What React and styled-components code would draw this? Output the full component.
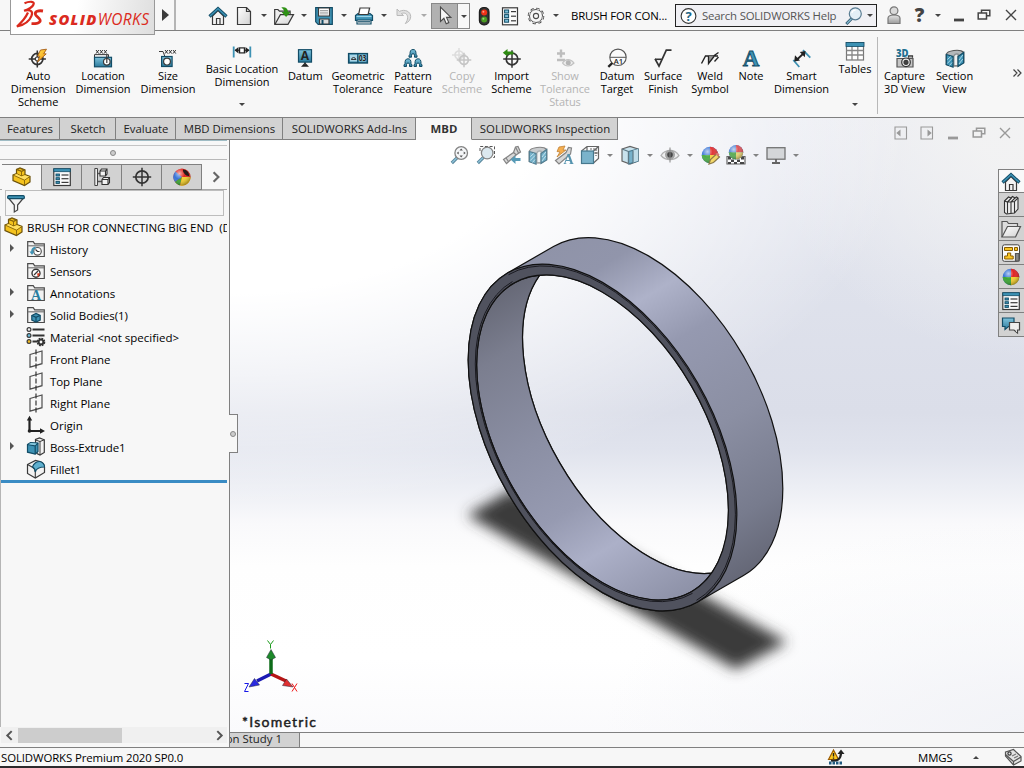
import React from 'react';
import styled, { createGlobalStyle, css } from 'styled-components';

const Global = createGlobalStyle`
  * { box-sizing: border-box; }
  body { margin: 0; background: #f7f7f7; overflow: hidden; }
  svg { display: block; flex: none; overflow: visible; }
`;

const ui = '"Open Sans", "Noto Sans", sans-serif';
const line = '#808080';
const ink = '#3a3a3a';
const blue = '#3d92b4';
const navy = '#124c66';

/* ---------- icons ---------- */

const Svg = ({ w = 20, h = 20, children, box }) => (
  <svg width={w} height={h} viewBox={box || `0 0 ${w} ${h}`} fill="none" stroke={ink} strokeWidth="1.2">{children}</svg>
);

const DefsSvg = styled.svg`position: absolute;`;
const Defs = () => (
  <DefsSvg width="0" height="0">
    <defs>
      <linearGradient id="gBlue" x1="0" y1="0" x2="0" y2="1"><stop offset="0" stopColor="#7fc3dc" /><stop offset="1" stopColor="#2b7b9d" /></linearGradient>
      <linearGradient id="gPaper" x1="0" y1="0" x2="1" y2="1"><stop offset="0" stopColor="#fff" /><stop offset="1" stopColor="#d2d2d2" /></linearGradient>
      <linearGradient id="gBolt" x1="0" y1="0" x2="1" y2="1"><stop offset="0" stopColor="#ffe14a" /><stop offset="1" stopColor="#f09416" /></linearGradient>
      <linearGradient id="gGray" x1="0" y1="0" x2="0" y2="1"><stop offset="0" stopColor="#e4e4e4" /><stop offset="1" stopColor="#9c9c9c" /></linearGradient>
      <radialGradient id="gShine" cx="0.35" cy="0.3" r="0.7"><stop offset="0" stopColor="#fff" stopOpacity="0.65" /><stop offset="0.45" stopColor="#fff" stopOpacity="0" /><stop offset="1" stopColor="#000" stopOpacity="0.3" /></radialGradient>
    </defs>
  </DefsSvg>
);

const Home = () => (
  <Svg>
    <path d="M4.5 10v8.5h11V10L10 4.6z" fill="#f4f4f4" />
    <path d="M8.5 18.5v-6h3.5v6" />
    <path d="M1.5 10.5 10 2.6l8.500 7.900" stroke={navy} strokeWidth="3.2" />
    <path d="M2 10.100 10 2.700l8 7.400" stroke={blue} strokeWidth="1.400" />
  </Svg>
);
const Doc = () => <Svg><path d="M3.5 1.5h9l4 4v13h-13z" fill="url(#gPaper)" /><path d="M12.5 1.5v4h4" /></Svg>;
const OpenDoc = () => (
  <Svg w={22}>
    <path d="M1.7 18.3V3.5h3.2l1.6 1.7h10.6v3.4" fill="#eee" />
    <path d="M2 18.3 7.4 8.6h13.1L15 18.3z" fill="url(#gPaper)" />
    <path d="M8.3 1.500c4.400-.8 6.500 1.200 6.800 4.600h2.400l-4.400 5-4.500-5h2.600c-.2-2-1-3.200-2.900-4.600z" fill="#2f9216" stroke="none" />
  </Svg>
);
const Save = () => (
  <Svg>
    <path d="M1.7 1.7h16.6v16.6H4.2l-2.5-2.5z" fill={blue} stroke={navy} />
    <path d="M4.5 2h11v8h-11z" fill="#fff" stroke={ink} />
    <path d="M6 4.5h8M6 6.2h8M6 7.9h8" stroke="#999" strokeWidth="0.9" />
    <path d="M5.5 13h9.5v5H5.5z" fill="#ddd" /><path d="M7.5 14h2v4h-2z" fill={navy} stroke="none" />
  </Svg>
);
const Print = () => (
  <Svg>
    <path d="M1.5 9.5 4 7.5h12l2.5 2v5h-17z" fill={blue} stroke={navy} />
    <path d="M6 2h9.6l-1.5 6.5H4.6z" fill="#fff" />
    <path d="M2.5 10.5h15" stroke="#9bd4e8" /><path d="M3 14h14v4H3z" fill="#eee" stroke={navy} /><path d="M4 15.8h12" stroke={navy} />
  </Svg>
);
const Undo = () => <Svg><path d="M3 3v6.5h6.5L7.4 7.6c3.300-1.500 6.200.2 6.200 4 0 2-.7 3.800-2.300 6 3.500-1.600 5.400-3.900 5.400-7 0-5-5.800-7.900-11.300-5.200z" fill="#e0e0e0" stroke="#b9b9b9" strokeWidth="1" /></Svg>;
const Cursor = () => <Svg><path d="M5.5 1v14.5l3.400-3.2 2.300 5.400 2.600-1.100-2.300-5.200h4.400z" fill="#f7f7f7" stroke="#4a4a4a" strokeWidth="1.1" /></Svg>;
const Traffic = () => (
  <Svg><rect x="5.4" y="1.5" width="9.6" height="17.4" rx="4.4" fill="#333" stroke="#1d1d1d" /><circle cx="10.2" cy="6.6" r="3" fill="#f03016" stroke="none" /><circle cx="10.2" cy="13.6" r="3" fill="#4a9b22" stroke="none" /><circle cx="9.4" cy="5.8" r="1" fill="#ff9b85" stroke="none" /><circle cx="9.4" cy="12.8" r="1" fill="#9bd67f" stroke="none" /></Svg>
);
const ListIcon = () => (
  <Svg>
    <rect x="2.5" y="1.8" width="15" height="17" fill="#fafafa" />
    {[4, 8.6, 13.2].map((y) => <g key={y}><rect x="4.6" y={y} width="4" height="3" fill="#7cc0da" stroke={navy} strokeWidth="1" /><path d={`M11 ${y + 1.6}h5`} /></g>)}
  </Svg>
);
const Gear = () => (
  <Svg>
    <circle cx="10" cy="10" r="7.3" stroke="#4c4c4c" strokeWidth="2" strokeDasharray="3.3 2.43" />
    <circle cx="10" cy="10" r="6.5" fill="#f7f7f7" stroke="#4c4c4c" strokeWidth="1" />
    <circle cx="10" cy="10" r="7" stroke="#f7f7f7" strokeWidth="1" strokeDasharray="2.2 3.3" strokeDashoffset="-.5" />
    <circle cx="10" cy="10" r="2.6" stroke="#4c4c4c" strokeWidth="1.1" />
  </Svg>
);
const HelpCircle = () => <Svg><circle cx="9.5" cy="10" r="7.4" fill="#fff" stroke="#333" strokeWidth="1.1" /><text x="9.5" y="14.7" fontSize="13" fontWeight="700" fontFamily={ui} textAnchor="middle" fill="#1e6686" stroke="none">?</text></Svg>;
const SearchGlass = () => (
  <Svg><path d="M2.3 18 8 12.2" stroke="#31566d" strokeWidth="3" /><path d="M2.8 17.5 8 12.2" stroke="#83b9d0" strokeWidth="1.3" /><circle cx="11.3" cy="7.8" r="6" fill="#e3eff6" stroke="#587b91" /><path d="M7.8 7a4 4 0 0 1 4-3" stroke="#fff" /></Svg>
);
const Person = () => <Svg><path d="M4 18.500v-5.300c0-2.100 2-3.200 6-3.200s6 1.100 6 3.200v5.300z" fill="url(#gGray)" stroke="#777" /><circle cx="10" cy="5.8" r="3.9" fill="#dadada" stroke="#777" /></Svg>;

const Crosshair = ({ c = '#333', children, x = 10, y = 11, r = 5.8 }) => (
  <><circle cx={x} cy={y} r={r} stroke={c} strokeWidth="1.7" /><path d={`M${x - r - 3} ${y}h${2 * r + 6}M${x} ${y - r - 3}v${2 * r + 6}`} stroke={c} strokeWidth="1.5" />{children}</>
);
const AutoDim = () => <Svg><Crosshair x={9.3} y={11} r={5.6}><circle cx="9.3" cy="11" r="2" fill="#f7f7f7" /><path d="m12.500 2 6-.8-2.800 4.500 2.500.2-8.700 8 2.300-5.600-2.200-.3z" fill="url(#gBolt)" stroke="#a75e15" strokeWidth="0.9" /></Crosshair></Svg>;
const Xxx = ({ x }) => <path d={[0, 4, 8].map((d) => `M${x + d} 2l2.8 3.6m0-3.6l-2.8 3.6`).join('')} stroke="#333" strokeWidth="1" />;
const LocDim = () => <Svg><Xxx x={3} /><path d="M1.5 9V6.6h14V13" strokeWidth="1" /><rect x="1.5" y="9.3" width="17" height="9.5" fill="url(#gBlue)" stroke={navy} /><circle cx="13.8" cy="13.8" r="3.3" fill="#fff" /><path d="M13.8 7v8" /></Svg>;
const SizeDim = () => <Svg><Xxx x={7} /><path d="M1 3.5h4l3 8" strokeWidth="1" /><rect x="3.6" y="8.5" width="10.5" height="10" fill="url(#gBlue)" stroke={navy} /><circle cx="9" cy="13.6" r="3.4" fill="#fff" /></Svg>;
const BasicDim = () => <Svg h={19} box="0 -2.5 20 19"><path d="M1.700 2v11M18.300 2v11" stroke={blue} strokeWidth="1.8" /><path d="M3 5.8h14" strokeWidth="1.3" /><path d="m2.500 5.800 4-3.300v6.600zM17.500 5.800l-4-3.300v6.600z" fill="#222" stroke="none" /><rect x="7.6" y="3.4" width="4.8" height="5" fill="#fff" stroke="#222" strokeWidth="1.2" /></Svg>;
const Datum = () => <Svg><path d="M6 18.8 10 14.5l4 4.3z" fill="#222" stroke="none" /><path d="M10 13v4" strokeWidth="1.5" /><rect x="3.5" y="1.7" width="13" height="12.4" fill="url(#gBlue)" stroke={navy} /><text x="10" y="12.2" textAnchor="middle" fontFamily={ui} fontWeight="700" fontSize="12" fill="#222" stroke="none">A</text></Svg>;
const GeoTol = () => <Svg><rect x=".6" y="5.6" width="18.8" height="9.4" fill="url(#gBlue)" stroke={navy} strokeWidth="1.4" /><rect x="2" y="7" width="7" height="6.5" fill="#aad5e6" stroke="none" /><rect x="10.600" y="7" width="7.600" height="6.500" fill="#9ccde0" stroke="none" /><path d="M9.8 6v9" stroke={navy} /><path d="M3.2 11.500h5M3.600 11.500a2 2 0 0 1 4 0" strokeWidth="1" /><text x="10.7" y="13.2" fontFamily={ui} fontWeight="700" fontSize="8" textLength="7.6" lengthAdjust="spacingAndGlyphs" fill="#222" stroke="none">03</text></Svg>;
const Bell = ({ x, y }) => <path d={`M${x} ${y + 8}v-1.500l1-1.500c0-3 .5-4.700 3-4.700s3 1.700 3 4.700l1 1.500v1.500h-2.500v-2a1.500 1.500 0 0 0-3 0v2z`} fill="url(#gBlue)" stroke={navy} strokeWidth="1" />;
const PatternF = () => <Svg><Bell x={6} y={1.2} /><Bell x={1} y={10.5} /><Bell x={11} y={10.5} /></Svg>;
const CopyS = () => <Svg><g opacity="0.75"><Crosshair c="#d5d5d5" x={7} y={7} r={4} /><Crosshair c="#b5b5b5" x={12} y={12} r={4.3} /></g></Svg>;
const ImportS = () => <Svg><Crosshair x={10} y={11} r={5.8} /><path d="M.8 4.8 5.5 1v2.400h5.800v3H5.500v2z" fill="#2d8a11" stroke="none" /></Svg>;
const ShowTol = () => <Svg><path d="M6 1.500v8M2 5.500h8M2 12h8" stroke="#bdbdbd" strokeWidth="2.400" /><path d="M7.500 15c3-4.500 8-4.500 11.500 0-3.500 4-8.500 4-11.500 0z" fill="#eee" stroke="#c2c2c2" /><circle cx="13.300" cy="14.700" r="2.500" fill="#b5b5b5" stroke="none" /></Svg>;
const DatumT = () => <Svg><circle cx="11" cy="9.300" r="8.200" fill="#fafafa" stroke="#555" strokeWidth="1.100" /><path d="M3 9.300h16" stroke="#555" strokeWidth="1" /><text x="11.300" y="15.800" textAnchor="middle" fontFamily={ui} fontWeight="600" fontSize="7.500" fill="#222" stroke="none">A1</text><path d="M1.300 18.800 5.300 15" stroke="#222" strokeWidth="2.400" /></Svg>;
const Surface = () => <Svg><path d="m2 10.800 4 7.200L13.300 2.200h5.200" stroke="#333" strokeWidth="1.700" /><path d="M2 11.300h6.800" stroke="#333" strokeWidth="1.600" /></Svg>;
const Weld = () => <Svg><path d="M1.500 15.500 5.500 8h12.500M13.500 8l5-3.500" stroke="#222" strokeWidth="1.400" /><path d="M8.500 8v7.500l5.500-7" fill="#999" stroke="#222" strokeWidth="1.300" /><path d="M14.500 13.500 18.500 9" stroke="#222" strokeWidth="1.300" /></Svg>;
const Note = () => <Svg><text x="10" y="18" textAnchor="middle" fontFamily='"Liberation Serif", serif' fontWeight="700" fontSize="23" fill={blue} stroke={navy} strokeWidth="0.900">A</text></Svg>;
const SmartD = () => <Svg><path d="m1.300 12 6 7M11 2.200l7.300 7.500" stroke={blue} strokeWidth="1.800" /><path d="m4.500 12 7.500-7" stroke="#222" strokeWidth="1.800" /><path d="m2.200 13.500.8-6.300 5 5.200zM13.500 3l-.700 6.200-5-5.100z" fill="#222" stroke="none" /></Svg>;
const Tables = () => <Svg h={19}><rect x="1.500" y=".7" width="17" height="17.300" fill="#fff" stroke="#777" /><path d="M1.500 8.500h17M1.500 13h17M7 4v14M12.800 4v14" stroke="#888" strokeWidth="1.300" /><rect x="1" y=".5" width="18" height="4" fill={blue} stroke={navy} strokeWidth=".8" /></Svg>;
const Capture = () => <Svg><path d="M2 10.500h16v8.500H2z" fill="#c5c5c5" stroke="#555" /><path d="M13.500 9.800V7.800h4v2" fill="#aaa" /><circle cx="11" cy="14.300" r="4.300" fill="#eee" stroke="#333" /><circle cx="11" cy="14.300" r="2" fill="#444" /><text x="1" y="9" fontFamily={ui} fontWeight="800" fontSize="10.500" textLength="12.500" lengthAdjust="spacingAndGlyphs" fill="#217092" stroke="none">3D</text></Svg>;
const Section = ({ f }) => (
  <Svg><g opacity={f ? 0.8 : 1}>
    <path d="M1.300 6.500C2 2.500 15 .500 18.700 4.500v10l-5.200 3.500-6 0-6.200-1.500z" fill="#b4b8bb" stroke="#555" />
    <path d="M8 8.500C9 5 12.500 4.500 14.500 6.500L13.500 8v9.500H8z" fill="#8b9093" stroke="none" />
    <path d="M9.500 8.500c.5-1.500 2-2 3-1.500v10h-3z" fill="#eef0f1" stroke="none" />
    <path d="M1.300 6.500 8 8.500v10.700l-6.700-2.500zM13 8.500l5.700-4V15L13 18.500z" fill={blue} stroke={navy} />
    <path d="m2.300 11.500 3.500-3M2.300 15.500l4.700-5M4.500 17.500l2.500-3M14 12l3.800-5M14 16l3.800-5" stroke="#c5e6f1" strokeWidth=".8" />
  </g></Svg>
);

const Part = () => (
  <Svg><path d="M1 8 4.500 6.500v-4L8 1l5 2v4.500l5 2V15l-5.500 3.500L1 13.500z" fill="#f4c21e" stroke="#6b5009" /><path d="m4.500 2.500 5 2L13 3M9.500 4.500V9M4.500 6.500l5 2.500 3.500-1.500" stroke="#86640a" strokeWidth=".9" /><path d="m1.500 8.300 3-1.300 5 2.500 3.500-1.300 4.500 1.600-5 3z" fill="#ffdf62" stroke="none" /><path d="m1 8 11.500 5.200v5.300M12.500 13.200 18 9.500M4.800 2.600 8 1.400l4.500 1.700-3 1z" stroke="#86640a" strokeWidth=".9" /></Svg>
);
const PropM = () => <Svg><rect x="1.800" y="2" width="16.500" height="16.500" fill="#fafafa" /><rect x="1.800" y="1.700" width="16.500" height="3" fill={blue} stroke={navy} strokeWidth=".8" />{[7, 10.700, 14.400].map((y) => <g key={y}><rect x="4" y={y} width="3.400" height="2" fill={blue} stroke={navy} strokeWidth=".9" /><path d={`M9.500 ${y + 1}h7`} /></g>)}</Svg>;
const Config = () => <Svg><path d="M5.500 6.500H8M5.500 14.500H10" stroke="#555" strokeWidth="1.500" /><path d="M2.800 1.500H5.500V18.500H2.800z" stroke="#444" strokeWidth="1" fill="#eee" /><path d="M8 4l1.500-2H15v5l-1.500 2H8zM8 4h5.500v5M13.500 4 15 2M10 12.500l1.500-2h6v5l-1.500 2h-6zM10 12.500h6v5M16 12.500l1.500-2" fill="#f2f2f2" stroke="#333" strokeWidth="1.100" /></Svg>;
const Target = () => <Svg><Crosshair y={10} r={6.200} /></Svg>;
const Ball = ({ children }) => (
  <Svg><g stroke="none"><circle cx="10" cy="10" r="8.300" fill="#3974d6" /><path d="M10 10V1.700A8.300 8.300 0 0 1 18.300 10z" fill="#df2525" /><path d="M10 10h8.300A8.300 8.300 0 0 1 10 18.300z" fill="#f4cf2e" /><path d="M10 10v8.300A8.300 8.300 0 0 1 1.700 10z" fill="#3ba534" /><circle cx="10" cy="10" r="8.300" fill="url(#gShine)" /></g>{children}</Svg>
);
const PaintBall = () => (
  <Svg><g stroke="none"><circle cx="10" cy="10" r="8.600" fill="#df2a22" /><path d="M10 10 3.500 4.500A8.600 8.600 0 0 0 3 15z" fill="#3974d6" /><path d="M10 10 3 15a8.600 8.600 0 0 0 5 3.400z" fill="#3ba534" /><path d="m10 10-2 8.400A8.600 8.600 0 0 0 18.600 10z" fill="#f4cf2e" /><circle cx="10" cy="10" r="8.600" fill="url(#gShine)" /></g><path d="M11 2.500c3-.5 6.500 3 6 6.500-3 .5-6.500-3.500-6-6.500z" fill="#241a1a" stroke="none" /></Svg>
);
const Filter = () => <Svg><path d="M2.500 4 8.300 11v7l3.300-2v-5L17.500 4z" fill="#f3f3f3" stroke="#444" /><rect x="1.700" y="1.700" width="16.600" height="3" rx="1" fill={blue} stroke={navy} /></Svg>;
const Folder = ({ children }) => <Svg><path d="M1.700 17.500V2.600h5.500l1.500 2.200h9.600v12.700z" fill="#f2f2f2" stroke="#4b4b4b" /><path d="M2 6.800h16" stroke="#777" />{children}</Svg>;
const History = () => <Folder><circle cx="11.500" cy="12.300" r="3.800" fill="#fff" stroke="#555" /><path d="M9.500 10.500 11.500 12.500h2" stroke="#333" /><path d="M3.500 12.500h5l-2.500 3.500z" fill={blue} stroke="none" /><path d="M6 13c0-2 1-4 3.500-4.500" stroke={blue} strokeWidth="1.800" /></Folder>;
const Sensors = () => <Folder><circle cx="10" cy="12.300" r="4" fill="#fff" stroke="#333" strokeWidth="1.400" /><path d="m8 14 4-4" /><path d="M11 12.500 14 12l-2 4.500z" fill="#dc3a1e" stroke="none" /></Folder>;
const Annot = () => <Folder><text x="10" y="16.500" textAnchor="middle" fontFamily='"Liberation Serif", serif' fontWeight="700" fontSize="14" fill="#287da0" stroke="none">A</text></Folder>;
const Bodies = () => <Folder><path d="m5.800 10.500 4.200-2 4.200 2v4.500l-4.200 2-4.200-2z" fill={blue} stroke={navy} /><path d="m6 10.500 4 1.800 4-1.800M10 12.300V17" stroke={navy} /></Folder>;
const Material = () => <Svg><path d="M6.500 2.500h12M6.500 8.500h12M6.500 14.500h5" stroke="#333" strokeWidth="1.900" /><circle cx="3" cy="2.500" r="1.900" fill="#eee" /><circle cx="3" cy="8.500" r="1.900" fill="#6abfe0" /><circle cx="3" cy="14.500" r="1.900" fill="#f4bd22" /><circle cx="15" cy="15" r="3.200" strokeWidth="2.200" strokeDasharray="1.700 .8" stroke="#333" /><circle cx="15" cy="15" r="2.300" stroke="#333" strokeWidth="1.800" /></Svg>;
const Plane = () => <Svg><path d="M4 5.500 16 2v12.700L4 18.200z" stroke="#4d4d4d" /><path d="M10 .5v19" strokeDasharray="5 2" stroke="#333" /></Svg>;
const Origin = () => <Svg><path d="M3.500 5v11h11" stroke="#222" strokeWidth="2.200" /><path d="M.8 5.500 3.500.8l2.700 4.700zM14 13.300l5 2.700-5 2.700z" fill="#222" stroke="none" /><circle cx="3.500" cy="16" r="1.800" fill="#222" stroke="none" /></Svg>;
const Extrude = () => <Svg><path d="M9.500 4V2.500l4-1.500 4.800 1.800v12.700L14 18l-3-1.500z" fill="#f2f2f2" /><path d="M14 18V4.500L9.500 3M14 4.500l4.300-1.700" strokeWidth="1" /><path d="m1.500 7.500 3-2 7.500.5v8.500l-2.800 2.700-7.700-2z" fill={blue} stroke={navy} /><path d="m1.500 7.500 7.700 1.300v8.400M9.200 8.800 12 6" stroke={navy} /><path d="m2.500 7.300 2.300-1.300 6 .5-1.800 1.700z" fill="#8ccbe0" stroke="none" /></Svg>;
const Fillet = () => <Svg><path d="M1.500 5.500 9.500 1.500 14 2.500c3 1 4.500 3 4.500 6v5L9.300 19l-7.800-4.500z" fill="#f2f2f2" /><path d="m1.500 5.500 5 2.700c2 1 2.800 3 2.800 5V19" strokeWidth="1.100" /><path d="M6.500 8C7.500 4.500 11 2.300 14 2.500c3 1 4.500 3 4.500 5.500-4.500 0-8.500 2-9.200 5C9.300 11 8.500 9 6.500 8z" fill="#5fb0cf" stroke={navy} /></Svg>;

const Glass = ({ area }) => <Svg><path d="m1.800 18 5.700-5.700" stroke="#44778f" strokeWidth="3.200" /><path d="m2.200 17.500 5.300-5.200" stroke="#83bdd6" strokeWidth="1.400" />{area && <path d="M4 6V1.500h14.500v11H16" strokeDasharray="3 1.700" stroke="#444" strokeWidth="1" />}<circle cx="11.200" cy="8" r={area ? 5.8 : 6.3} fill={area ? '#d8e6ee' : '#f4f6f8'} stroke="#777" strokeWidth="1.300" />{!area && <path d="m9.500 5.500 1.700-2 1.700 2zM9.500 10.500l1.700 2 1.700-2zM8.700 6.500l-2 1.500 2 1.500zM13.700 6.500l2 1.500-2 1.500z" fill="#444" stroke="none" />}</Svg>;
const PrevV = () => <Svg><path d="M1.500 14.500 11.500 7.500l2-5.500 2.500-.5 2.500 5.500-4.500 3L4.500 18.500z" fill="#d4d4d4" stroke="#777" /><path d="m4 13 2.500 3.500M11.500 7.500l3 2.500M13.500 2l3 6" stroke="#777" /><path d="m8.500 14.500 5-4v2.600h5v3h-5V19z" fill="#4590af" stroke="none" /></Svg>;
const DynA = () => <Svg><path d="M1.500 15.500 12 7.500l2.500-5 3 .5-1 6L5 19z" fill="#d4d4d4" stroke="#777" /><path d="m5 2 6-1-2 4h3l-9 7 3-5-3-.5z" fill="#f5a63d" stroke="#b87522" strokeWidth=".8" /><text x="14.500" y="19" textAnchor="middle" fontFamily='"Liberation Serif", serif' fontWeight="700" fontSize="14" fill="#4489a7" stroke="none">A</text></Svg>;
const Orient = () => <Svg><path d="m1.500 6 5.500-4.500h11.500v12L13.500 18M7 1.500V6M13.500 6l5-4.500M18.500 8h-5" stroke="#555" /><path d="M10 4h6v7" stroke="#555" strokeDasharray="2 1" /><rect x="1.500" y="6" width="12" height="12.500" fill="#6dacc6" stroke="#336a82" /></Svg>;
const Display = () => <Svg><path d="m2 4 8-2.500 8 2.500v12l-8 3-8-3z" fill="#c3e0ec" stroke="#555" /><path d="M8.500 6.500 18 4v12l-9.500 3z" fill="#69aac5" stroke="#336a82" /><path d="M13 5.500v12l5-1.500V4z" fill="#b9d9e6" stroke="none" /><path d="M8.500 6.500v12.500M2 4l6.500 2.500M13 5.500v12" stroke="#4d6b79" /></Svg>;
const Eye = () => <Svg><path d="M1 10.500C5 4 14.500 3.500 19 10.500 14.500 16 5.500 16 1 10.500z" fill="#eee" stroke="#aaa" /><circle cx="10" cy="9.700" r="5" fill="#9a9a9a" stroke="none" /><circle cx="10" cy="9.700" r="2.800" fill="#333" stroke="none" /><path d="M10 2.500v15" stroke="#777" strokeWidth="1" /></Svg>;
const EditApp = () => <Ball><path d="m9 19 1.500-4.500 6-5.500 3 3-6 5.500z" fill="#f3d55a" stroke="#806b35" /><path d="m15.500 9 2-1.500 2 2-1.500 2z" fill="#d66f65" stroke="none" /></Ball>;
const Scene = () => <Svg><path d="M1 11.500h18v7.500H1z" fill="#fff" stroke="#555" /><path d="M2 12h3v2.500H2zM15 12h3v2.500h-3zM5 14.500h3V17H5zM11 14.500h3V17h-3zM2 17h3v2H2zM8 17h3v2H8zM14 17h4v2h-4z" fill="#333" stroke="none" /><g transform="translate(1.300 -.5) scale(.87)" stroke="none"><circle cx="10" cy="9" r="8.300" fill="#4f82d4" /><path d="M10 9V.7A8.300 8.300 0 0 1 18.300 9z" fill="#d9454a" /><path d="M10 9h8.300A8.300 8.300 0 0 1 10 17.300z" fill="#ead267" /><path d="M10 9v8.300A8.300 8.300 0 0 1 1.700 9z" fill="#4ca545" /><circle cx="10" cy="9" r="8.300" fill="url(#gShine)" /></g></Svg>;
const Monitor = () => <Svg><rect x="1" y="2.700" width="18" height="11.500" fill="#d2d4d6" stroke="#666" strokeWidth="1.300" /><path d="M10 14v3.500M6 18h8" stroke="#555" strokeWidth="1.800" /></Svg>;

const Books = () => <Svg><path d="M3.500 6 7.500 2l2.500 1 1.500-1.500L14 3l1.500-1L17 3v11l-3.500 4-8 1L3.500 17.500z" fill="#eee" stroke="#333" strokeWidth="1.100" /><path d="M6.500 7v11.500M10 7v11.500M13.500 6.500V18M3.500 6l3 1L10.500 3M6.500 7h3.500L14 3M10 7l3.500-.500L17 3" stroke="#333" strokeWidth="1.100" /></Svg>;
const OpenFolder = () => <Svg w={22}><path d="M2 18V2.500h5l1.500 2h9v3.500" fill="#ddd" stroke="#555" /><path d="M2 18 7.500 7.500h13L15.500 18z" fill="url(#gPaper)" stroke="#555" /></Svg>;
const Palette = () => <Svg><rect x="1.500" y="1.800" width="17" height="16.500" rx="2" fill="#fafafa" stroke="#444" strokeWidth="1" /><path d="M3.500 4.500h8v3h-8zM13.500 4.500h3v3h-3zM6.500 10h3.200v3h2.500v3h-8.500v-3h2.800z" fill="#f7c525" stroke="#8a5c00" strokeWidth="1" /><path d="M14.500 10.500h3.500v7.500h-3.500z" fill="#888" stroke="#555" /></Svg>;
const Forum = () => <Svg><path d="M1.500 3h11.500v8.500H7.500l-3.500 3v-3H1.500z" fill="url(#gBlue)" stroke={navy} /><path d="M8.500 7.500h10v7.500h-2V18l-3.500-3H8.500z" fill="#eee" stroke="#444" /></Svg>;
const Warn = () => <Svg><path d="M1.500 12.500 6.500 3l5 9.500z" fill="#ffc91d" stroke="#9c5b00" /><path d="M6.500 6v3.500M6.500 10.500v1.200" stroke="#222" strokeWidth="1.400" /><path d="M4 13.500c6 1 9.500-1 10-7" stroke="#222" strokeWidth="2.200" /><path d="m10.500 7 3.500-4.500L17.500 7z" fill="#222" stroke="none" /><path d="M2 16h13" stroke="#205a80" strokeWidth="3" strokeDasharray="2.500 1" /></Svg>;
const Tag = () => <Svg><path d="m2.500 5 8-2.500 7.500 7v4.500l-7.500 4-8-9z" fill="#e4e4e4" stroke="#555" /><path d="m2.500 7.500 8 7 7.500-4.500M10.500 14.500v3.500" stroke="#555" /><circle cx="6.500" cy="6.500" r="1.600" /><path d="m9 9 4-2M11 11l4-2" stroke="#777" /></Svg>;

/* ---------- shared pieces ---------- */

const Caret = styled.i`
  display: block;
  flex: none;
  width: 0;
  height: 0;
  border: 3px solid transparent;
  border-top-color: ${(p) => p.$c || '#444'};
  border-bottom-width: 0;
`;
const Cell = styled.div`
  width: ${(p) => p.$w || 26}px;
  flex: none;
  display: flex;
  align-items: center;
  justify-content: ${(p) => (p.$end ? 'flex-end' : 'center')};
`;
const Drop = ({ w = 13, c }) => <Cell $w={w}><Caret $c={c} /></Cell>;

const Window = styled.div`
  width: 1024px;
  height: 768px;
  display: grid;
  grid-template-rows: 31px 87px 629px 21px;
  font-family: ${ui};
  font-size: 11.4px;
  color: #000;
  background: #f7f7f7;
  overflow: hidden;
  white-space: nowrap;
`;

/* ---------- title bar ---------- */

const TitleBar = styled.header`
  display: flex;
  border-bottom: 1px solid ${line};
  height: 31px;
  padding-left: 10px;
`;
const Logo = styled.div`
  width: 145px;
  height: 35px;
  flex: none;
  position: relative;
  z-index: 2;
  display: flex;
  padding-left: 5px;
  border: 1px solid #999;
  border-top: 0;
  background: linear-gradient(100deg, #fff 45%, #dedede);
`;
const Brand = styled.div`
  font: italic 400 15.5px/1 "Open Sans", sans-serif;
  padding: 12px 0 0 1px;
  color: #db2a20;
  letter-spacing: 0.4px;
  b { font-weight: 800; letter-spacing: 1.3px; font-size: 14.8px; }
`;
const Flyout = styled.div`
  width: 21px;
  flex: none;
  padding: 9px 0 0 7px;
  border-right: 2px solid #b5b5b5;
  &::before {
    content: '';
    display: block;
    width: 0;
    border: 6.5px solid transparent;
    border-left: 7px solid #3b3b3b;
    border-right-width: 0;
  }
`;
const QuickBar = styled.div`
  display: flex;
  padding: 0 0 0 29px;
  height: 31px;
`;
const SelectBox = styled.div`
  display: flex;
  width: 39px;
  margin: 3px 1px 2px;
  border: 1px solid #888;
  & > :first-child { background: #b1b1b1; border-right: 1px solid #888; }
`;
const FileName = styled.div`
  width: 113px;
  padding: 8px 0 0 9px;
  line-height: 16px;
  letter-spacing: -0.16px;
`;
const SearchBox = styled.div`
  width: 202px;
  height: 23px;
  margin-top: 4px;
  flex: none;
  display: flex;
  align-items: center;
  border: 1px solid #222;
  background: #f0f0f4;
  color: #555;
  padding-left: 3px;
`;
const SearchText = styled.span`width: 146px; padding-left: 3px; letter-spacing: -0.2px;`;
const Question = styled.b`font: 800 19px/1 "Open Sans", sans-serif; color: #444;`;
const WinGlyph = ({ kind, c = '#444' }) => (
  <svg width="14" height="14" viewBox="0 0 14 14" fill="none" stroke={c} strokeWidth="1.500">
    {kind === 'min' && <path d="M2 12h10" strokeWidth="2.800" />}
    {kind === 'restore' && <path d="M4.500 5V2.200h8.300v5.600H9.500M1.200 5h8.300v6H1.200z" />}
    {kind === 'close' && <path d="m2 2 10 10M12 2 2 12" strokeWidth="1.400" />}
    {kind === 'left' && <><path d="M1 1h11.500v12H1z" strokeWidth="1.100" /><path d="M6.500 3.500v7L2.300 7z" fill={c} stroke="none" /></>}
    {kind === 'right' && <><path d="M1 1h11.500v12H1z" strokeWidth="1.100" /><path d="M7.500 3.500v7L11.700 7z" fill={c} stroke="none" /></>}
  </svg>
);

/* ---------- ribbon ---------- */

const Ribbon = styled.section`
  display: flex;
  padding-left: 6px;
  border-bottom: 1px solid ${line};
`;
const Tool = styled.div`
  width: ${(p) => p.$w}px;
  flex: none;
  padding-top: ${(p) => (p.$menu ? 11 : 17)}px;
  height: 84px;
  display: flex;
  flex-direction: column;
  align-items: center;
  color: ${(p) => (p.$off ? '#b4b4b4' : '#000')};
`;
const ToolLabel = styled.span`
  margin-top: 1px;
  text-align: center;
  white-space: pre;
  line-height: 13px;
  font-size: 11px;
  letter-spacing: -0.05px;
`;
const MenuCaret = styled(Caret)`
  margin: auto 0 9px;
`;
const Divider = styled.div`
  width: 1px;
  margin: 6px 2px 3px;
  background: #b8b8b8;
`;
const More = styled.div`
  margin-left: auto;
  padding: 36px 2px 0 0;
`;
const tools = [
  [64.5, 'Auto\nDimension\nScheme', AutoDim], [65, 'Location\nDimension', LocDim], [65, 'Size\nDimension', SizeDim],
  [83, 'Basic Location\nDimension', BasicDim, 'menu'], [43.5, 'Datum', Datum], [62, 'Geometric\nTolerance', GeoTol],
  [48, 'Pattern\nFeature', PatternF], [50, 'Copy\nScheme', CopyS, 'off'], [49, 'Import\nScheme', ImportS],
  [58, 'Show\nTolerance\nStatus', ShowTol, 'off'], [46, 'Datum\nTarget', DatumT], [46, 'Surface\nFinish', Surface],
  [48, 'Weld\nSymbol', Weld], [34, 'Note', Note], [67, 'Smart\nDimension', SmartD], [40, 'Tables', Tables, 'menu'],
  null, [49, 'Capture\n3D View', Capture], [51, 'Section\nView', Section],
];

/* ---------- workspace ---------- */

const Workspace = styled.main`
  display: grid;
  grid-template-columns: 230px 794px;
  grid-template-rows: 22px 607px;
  min-height: 0;
`;
const Tabs = styled.nav`
  grid-area: 1 / 1 / 2 / 3;
  z-index: 2;
  justify-self: start;
  display: flex;
`;
const Tab = styled.div`
  width: ${(p) => p.$w}px;
  height: 22px;
  line-height: 21px;
  padding-left: 1px;
  text-align: center;
  color: #222;
  background: #d2d2d2;
  border-right: 1px solid ${line};
  border-bottom: 1px solid ${line};
  ${(p) => p.$on && css`background: #f7f7f7; font-weight: 700; border-bottom-color: #f7f7f7; color: #333;`}
`;
const Side = styled.aside`
  grid-area: 2 / 1 / 3 / 2;
  border-right: 1px solid ${line};
  display: flex;
  flex-direction: column;
  min-width: 0;
  overflow: hidden;
`;
const Grip = styled.div`
  height: 20px;
  border-top: 1px solid #9fbcc4;
  border-bottom: 1px solid #b8b8b8;
  display: flex;
  flex-direction: column;
  align-items: center;
  margin-right: 2px;
  &::before { content: ''; width: 100%; height: 4px; border-bottom: 1px solid #c4c4c4; }
`;
const Dot = styled.i`
  width: 6px;
  height: 6px;
  border-radius: 3px;
  border: 1px solid #888;
  background: #ccc;
`;
const GripDot = styled(Dot)`margin: 4px 2px 0 0;`;
const PanelTabs = styled.div`
  height: 26px;
  margin: 4px 2px 0 0;
  padding-left: 2px;
  display: flex;
  border-bottom: 1px solid #aaa;
`;
const PanelTab = styled.div`
  width: 40px;
  flex: none;
  height: 26px;
  display: grid;
  place-items: center;
  border: 1px solid ${line};
  border-left: 0;
  background: ${(p) => (p.$on ? '#f7f7f7' : '#d2d2d2')};
  ${(p) => p.$on && css`border-bottom-color: #f7f7f7;`}
`;
const Chevron = ({ left, s = 10, c = '#555' }) => <svg width={s} height={s} viewBox="0 0 10 10" fill="none" stroke={c} strokeWidth="1.800"><path d={left ? 'M7 1 3 5l4 4' : 'm3 1 4 4-4 4'} /></svg>;
const FilterBox = styled.div`
  width: 219px;
  height: 26px;
  margin-left: 5px;
  border: 1px solid #bdbdbd;
  padding: 3px 0;
`;
const Tree = styled.div`
  flex: 1;
  border-left: 1px solid #b5b5b5;
  margin-right: 2px;
  overflow: hidden;
`;
const Row = styled.div`
  height: 22px;
  display: flex;
  align-items: center;
  padding-left: ${(p) => (p.$root ? 3 : 0)}px;
  white-space: pre;
  overflow: hidden;
`;
const Expander = styled.span`
  width: 25px;
  flex: none;
  padding-left: 9px;
  &::before {
    content: '';
    display: ${(p) => (p.$show ? 'block' : 'none')};
    width: 0;
    border: 4px solid transparent;
    border-left: 4px solid #555;
    border-right: 0;
    margin-top: -3px;
  }
`;
const RowText = styled.span`
  padding-left: ${(p) => (p.$root ? 3 : 4)}px;
  font-size: 11.5px;
  letter-spacing: ${(p) => p.$ls || 0}px;
`;
const Rollback = styled.div`height: 3px; background: #3a8cc4;`;
const Scroll = styled.div`
  height: 16px;
  margin: 0 2px 4px 1px;
  background: #f0f0f0;
  display: flex;
  align-items: center;
  justify-content: space-between;
  padding: 0 2px 0 3px;
`;
const Thumb = styled.div`width: 104px; height: 15px; background: #cdcdcd; margin: 0 auto 0 3px;`;

const tree = [
  ['History', History, 1, -0.05], ['Sensors', Sensors, 0, -0.15], ['Annotations', Annot, 1], ['Solid Bodies(1)', Bodies, 1, -0.05],
  ['Material <not specified>', Material, 0, 0], ['Front Plane', Plane, 0, -0.1], ['Top Plane', Plane, 0, -0.08], ['Right Plane', Plane],
  ['Origin', Origin], ['Boss-Extrude1', Extrude, 1, -0.15], ['Fillet1', Fillet, 0, -0.1],
];

const View = styled.section`
  grid-area: 1 / 2 / 3 / 3;
  position: relative;
  display: grid;
  grid-template-columns: 1fr;
  grid-template-rows: 614px 15px;
`;
const Canvas = styled.div`
  position: relative;
  overflow: hidden;
  background:
    radial-gradient(ellipse 680px 390px at 0 0, #fff 45%, rgba(255,255,255,.65) 66%, rgba(255,255,255,0) 100%),
    radial-gradient(ellipse 260px 240px at 100% 0, rgba(243,243,243,.9) 20%, rgba(243,243,243,0)),
    radial-gradient(ellipse 420px 210px at 100% 100%, rgba(242,243,247,1), rgba(242,243,247,0)),
    linear-gradient(180deg, #e8eaf2 0, #dfe2ec 25%, #dbdee9 48%, #e0e3ed 54%, #eceef4 60%, #f9f9fb 66%, #fefefe 73%, #fff 88%, #fafafc 100%);
`;
const SceneSvg = styled.svg`
  position: absolute;
  inset: 0;
`;
const Overlay = styled.div`
  position: relative;
  height: 614px;
  display: grid;
  grid-template-columns: 217px 1fr 139px;
  grid-template-rows: 50px 1fr;
`;
const HeadsUp = styled.div`
  grid-column: 2;
  display: flex;
  height: 20px;
  margin-top: 27px;
  opacity: 0.9;
`;
const DocButtons = styled.div`
  grid-column: 3;
  display: flex;
  height: 20px;
  margin-top: 5px;
  padding-left: 3px;
`;
const TaskPane = styled.div`
  grid-area: 2 / 3;
  justify-self: end;
  width: 26px;
  margin-top: 1px;
`;
const TaskTab = styled.div`
  height: ${(p) => (p.$on ? 23 : p.$last ? 25 : 24)}px;
  border: 1px solid ${line};
  border-bottom-width: ${(p) => (p.$last ? 1 : 0)}px;
  border-right: 0;
  background: ${(p) => (p.$on ? '#f9f9f9' : '#d2d2d2')};
  display: flex;
  justify-content: center;
  padding: 2px 2px 0 0;
  overflow: hidden;
`;
const Handle = styled.div`
  position: absolute;
  left: -1px;
  top: 296px;
  width: 9px;
  height: 39px;
  background: #f7f7f7;
  border: 1px solid ${line};
  border-left: 0;
  display: grid;
  place-items: center;
`;
const Study = styled.div`
  display: flex;
  border-top: 1px solid ${line};
  height: 15px;
  background: #f7f7f7;
`;
const StudyTab = styled.div`
  width: 70px;
  overflow: hidden;
  display: flex;
  justify-content: flex-end;
  background: #d2d2d2;
  border-right: 1px solid ${line};
  line-height: 12px;
  padding-right: 17px;
  color: #222;
`;
const Status = styled.footer`
  border-top: 1px solid ${line};
  border-bottom: 2px solid #2c2a2c;
  display: flex;
  align-items: center;
  padding-left: 1px;
`;
const StatusText = styled.span`
  width: ${(p) => p.$w}px;
  padding-left: ${(p) => p.$pad || 0}px;
  flex: none;
  letter-spacing: -0.1px;
`;
const UpCaret = styled(Caret)`transform: rotate(180deg); margin-left: 19px;`;

const Ring = () => (
  <SceneSvg width="794" height="614" viewBox="230 118 794 614" fill="none">
    <defs>
      <filter id="soft" x="-20%" y="-20%" width="140%" height="140%"><feGaussianBlur stdDeviation="7" /></filter>
      <linearGradient id="outer" gradientUnits="userSpaceOnUse" x1="550" y1="240" x2="760" y2="590">
        <stop offset="0" stopColor="#8f93a8" /><stop offset="0.120" stopColor="#9195ab" /><stop offset="0.240" stopColor="#aeb2c9" /><stop offset="0.370" stopColor="#9599b0" /><stop offset="0.600" stopColor="#8b8fa3" /><stop offset="0.820" stopColor="#777b8d" /><stop offset="1" stopColor="#5e606e" />
      </linearGradient>
      <linearGradient id="inner" gradientUnits="userSpaceOnUse" x1="500" y1="270" x2="690" y2="590">
        <stop offset="0" stopColor="#60626f" /><stop offset="0.200" stopColor="#7b7e8f" /><stop offset="0.450" stopColor="#8b8fa4" /><stop offset="0.650" stopColor="#969ab1" /><stop offset="0.790" stopColor="#acb0c8" /><stop offset="0.900" stopColor="#9ca0b7" /><stop offset="1" stopColor="#8e92a8" />
      </linearGradient>
    </defs>
    <path d="M473 515 512 493 781 642 736 666z" fill="#3a3a3a" stroke="#3a3a3a" strokeWidth="6" filter="url(#soft)" />
    <path fillRule="evenodd" fill="url(#outer)" stroke="#111" strokeWidth="1.200"
      d="M507.500 273 553.500 246.500A180 103.920 60 0 1 743.500 575.500L697.500 602A180 103.920 60 0 1 507.500 273zM539.500 275.300A178 102.800 60 0 1 711.500 573.200 178 102.800 60 0 1 539.500 275.300z" />
    <path fill="url(#inner)" stroke="#111" strokeWidth="1.200"
      d="M539.500 275.300A178 102.800 60 1 0 711.500 573.200 178 102.800 60 0 1 539.500 275.300z" />
    <path fillRule="evenodd" fill="#50525e" stroke="#111" strokeWidth="1.200"
      d="M507.500 273A180 103.920 60 0 1 697.500 602 180 103.920 60 0 1 507.500 273zM513.500 283.300A170 98.150 60 0 1 691.500 591.700 170 98.150 60 0 1 513.500 283.300z" />
    <g stroke="#1a1a20" strokeWidth="1">
      <path d="M508.500 274.700A180 103.920 60 0 1 696.500 600.300" />
      <path d="M512.500 281.500A170 98.150 60 0 0 692.500 593.300" />
    </g>
    <g stroke="#25253a" strokeWidth="0.500">
      <path d="m271 674-14 7" stroke="#1b1bb4" strokeWidth="3.500" /><path d="m271 674 15 7" stroke="#b51515" strokeWidth="3.500" /><path d="M271 674v-17" stroke="#0c6b18" strokeWidth="3.500" />
      <path d="m249 687 5.500-8.500 5 6.500z" fill="#2a2ae0" /><path d="m293 687-10.500-1.500 4-6.500z" fill="#e03030" /><path d="m271 649.500-4.500 8 4.500 2.500 4.500-2.500z" fill="#1d8a2a" />
    </g>
    <path d="m267.500 640.500 3 4 3-4M270.500 644.500v4" stroke="#1b9a1b" strokeWidth="1" />
    <path d="M244.500 683.500h4l-4 8h4" stroke="#1616e8" strokeWidth="1" />
    <path d="m292 683.500 5 8M297 683.500l-5 8" stroke="#f01515" strokeWidth="1" />
    <text x="242" y="727" fontFamily="Lato, sans-serif" fontSize="14" textLength="74" fill="#1c1c1c" stroke="#1c1c1c" strokeWidth="0.450">*Isometric</text>
  </SceneSvg>
);

const AreaGlass = () => <Glass area />;
const FadedSection = () => <Section f />;
const headsUp = [Glass, AreaGlass, PrevV, FadedSection, DynA, Orient, 0, Display, 0, Eye, 0, EditApp, Scene, 0, Monitor, 0];
const taskTabs = [Home, Books, OpenFolder, Palette, Ball, PropM, Forum];

export default function App() {
  return (
    <Window>
      <Global />
      <TitleBar>
        <Defs />
        <Logo>
          <svg width="32" height="34" viewBox="0 0 32 34" fill="none" stroke="#da291c" strokeWidth="2.200">
            <path d="M8.500 3.200C14 .8 19 1.500 17.500 4.500 16.500 7 12 9.500 8 10.800c6-1.600 9.500.2 7.500 5C13.500 21 7.500 25 1 26.500 5.500 22.500 9.500 18 12 12.500" />
            <path d="M27 11c-4.500-.8-8.500.5-7.500 3.500 1 2.500 6 4.500 4.500 7-1.300 2-5 2.300-8.500 2.200" strokeWidth="2.800" />
          </svg>
          <Brand><b>SOLID</b>WORKS</Brand>
        </Logo>
        <Flyout />
        <QuickBar>
          <Cell><Home /></Cell>
          <Cell><Doc /></Cell><Drop />
          <Cell $w={27}><OpenDoc /></Cell><Drop />
          <Cell $w={27}><Save /></Cell><Drop />
          <Cell $w={27}><Print /></Cell><Drop />
          <Cell $w={27}><Undo /></Cell><Drop c="#aaa" />
          <SelectBox><Cell $w={26}><Cursor /></Cell><Drop w={12} /></SelectBox>
          <Cell><Traffic /></Cell>
          <Cell><ListIcon /></Cell>
          <Cell><Gear /></Cell><Drop />
          <FileName>BRUSH FOR CON...</FileName>
        </QuickBar>
        <SearchBox>
          <HelpCircle /><SearchText>Search SOLIDWORKS Help</SearchText><SearchGlass /><Drop w={12} />
        </SearchBox>
        <Cell $w={34}><Person /></Cell>
        <Cell $w={17}><Question>?</Question></Cell>
        <Drop w={20} />
        <Cell $w={22}><WinGlyph kind="min" /></Cell>
        <Cell $w={28}><WinGlyph kind="restore" /></Cell>
        <Cell $w={26}><WinGlyph kind="close" /></Cell>
      </TitleBar>

      <Ribbon>
        {tools.map((t, i) => {
          if (!t) return <Divider key={i} />;
          const [w, label, Icon, mode] = t;
          const menu = mode === 'menu';
          return (
            <Tool key={label} $w={w} $menu={menu} $off={mode === 'off'}>
              <Icon />
              <ToolLabel>{label}</ToolLabel>
              {menu && <MenuCaret />}
            </Tool>
          );
        })}
        <More>
          <svg width="10" height="12" viewBox="0 0 10 12" fill="none" stroke="#444" strokeWidth="1.200"><path d="m1.500 2.500 3.500 3.500-3.500 3.500M5.500 2.500 9 6 5.500 9.500" /></svg>
        </More>
      </Ribbon>

      <Workspace>
        <Tabs>
          {[['Features', 60], ['Sketch', 56], ['Evaluate', 60], ['MBD Dimensions', 107], ['SOLIDWORKS Add-Ins', 133], ['MBD', 56], ['SOLIDWORKS Inspection', 146]].map(([t, w]) => (
            <Tab key={t} $w={w} $on={t === 'MBD'}>{t}</Tab>
          ))}
        </Tabs>
        <Side>
          <Grip><GripDot /></Grip>
          <PanelTabs>
            <PanelTab $on><Part /></PanelTab>
            <PanelTab><PropM /></PanelTab>
            <PanelTab><Config /></PanelTab>
            <PanelTab><Target /></PanelTab>
            <PanelTab><PaintBall /></PanelTab>
            <Cell $w={28}><Chevron s={12} c="#666" /></Cell>
          </PanelTabs>
          <FilterBox><Filter /></FilterBox>
          <Tree>
            <Row $root><Part /><RowText $root $ls={-0.05}>BRUSH FOR CONNECTING BIG END  (Default)</RowText></Row>
            {tree.map(([t, Icon, open, ls]) => (
              <Row key={t}><Expander $show={open} /><Icon /><RowText $ls={ls}>{t}</RowText></Row>
            ))}
            <Rollback />
          </Tree>
          <Scroll><Chevron left s={11} /><Thumb /><Chevron s={11} /></Scroll>
        </Side>
        <View>
          <Canvas>
            <Ring />
            <Overlay>
              <HeadsUp>
                {headsUp.map((Icon, i) => (Icon ? <Cell key={i}><Icon /></Cell> : <Drop key={i} w={14} c="#777" />))}
              </HeadsUp>
              <DocButtons>
                {['left', 'right', 'min', 'restore', 'close'].map((k) => <Cell key={k} $w={26}><WinGlyph kind={k} c="#999" /></Cell>)}
              </DocButtons>
              <TaskPane>
                {taskTabs.map((Icon, i) => <TaskTab key={i} $on={i === 0} $last={i === 6}><Icon /></TaskTab>)}
              </TaskPane>
            </Overlay>
          </Canvas>
          <Study><StudyTab>Motion Study 1</StudyTab></Study>
          <Handle><Dot /></Handle>
        </View>
      </Workspace>

      <Status>
        <StatusText $w={826}>SOLIDWORKS Premium 2020 SP0.0</StatusText>
        <Warn />
        <StatusText $w={107} $pad={71}>MMGS</StatusText>
        <UpCaret />
        <Cell $w={44} $end><Tag /></Cell>
      </Status>
    </Window>
  );
}
